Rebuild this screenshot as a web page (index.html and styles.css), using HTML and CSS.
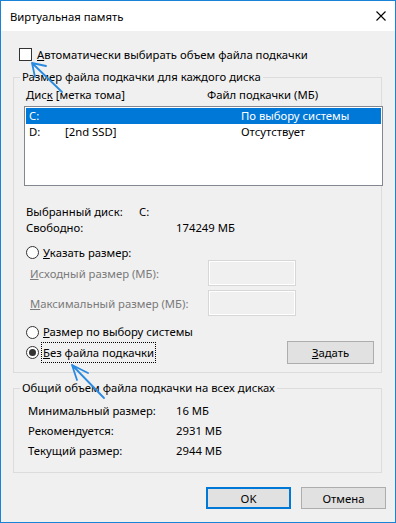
FILE: index.html
```html
<!DOCTYPE html>
<html lang="ru">
<head>
    <meta charset="UTF-8">
    <meta name="viewport" content="width=device-width, initial-scale=1.0">
    <title>Виртуальная память</title>
    <link rel="stylesheet" href="styles.css">
</head>
<body>
    <div class="window">
        <!-- Заголовок окна -->
        <div class="titlebar">
            <span class="title">Виртуальная память</span>
            <svg class="close" width="10" height="10" viewBox="0 0 10 10">
                <path d="M0.5 0.5 L9.5 9.5 M9.5 0.5 L0.5 9.5" stroke="#000" stroke-width="1.1" fill="none"/>
            </svg>
        </div>

        <div class="content">
            <div class="check-row">
                <span class="checkbox"></span>
                <span><u>А</u>втоматически выбирать объем файла подкачки</span>
            </div>

            <!-- Размер файла для каждого диска -->
            <fieldset class="group group-disks">
                <legend>Размер файла подкачки для каждого диска</legend>
                <div class="list-head">
                    <span class="col-disk">Дис<u>к</u> [метка тома]</span>
                    <span>Файл подкачки (МБ)</span>
                </div>
                <div class="listbox">
                    <div class="list-row selected">
                        <span>C:</span><span></span><span>По выбору системы</span>
                    </div>
                    <div class="list-row">
                        <span>D:</span><span>[2nd SSD]</span><span>Отсутствует</span>
                    </div>
                </div>

                <div class="info">
                    <div class="info-row"><span class="key-disk">Выбранный диск:</span><span>C:</span></div>
                    <div class="info-row"><span class="key-free">Свободно:</span><span>174249 МБ</span></div>
                </div>

                <div class="radio-row first">
                    <span class="radio"></span>
                    <span class="radio-label"><u>У</u>казать размер:</span>
                </div>
                <div class="size-row">
                    <span class="size-label disabled"><u>И</u>сходный размер (МБ):</span>
                    <span class="size-input"></span>
                </div>
                <div class="size-row">
                    <span class="size-label disabled"><u>М</u>аксимальный размер (МБ):</span>
                    <span class="size-input"></span>
                </div>
                <div class="radio-row second">
                    <span class="radio"></span>
                    <span class="radio-label"><u>Р</u>азмер по выбору системы</span>
                </div>
                <div class="radio-row last">
                    <span class="radio checked"></span>
                    <span class="radio-label focused"><u>Б</u>ез файла подкачки</span>
                    <button class="btn btn-set"><u>З</u>адать</button>
                </div>
            </fieldset>

            <!-- Общий объем -->
            <fieldset class="group group-total">
                <legend>Общий объем файла подкачки на всех дисках</legend>
                <div class="total-row"><span class="total-key">Минимальный размер:</span><span>16 МБ</span></div>
                <div class="total-row"><span class="total-key">Рекомендуется:</span><span>2931 МБ</span></div>
                <div class="total-row"><span class="total-key">Текущий размер:</span><span>2944 МБ</span></div>
            </fieldset>

            <div class="buttons">
                <button class="btn btn-default">OK</button>
                <button class="btn">Отмена</button>
            </div>
        </div>

        <!-- Стрелки-пометки поверх окна -->
        <svg class="arrows" width="396" height="523" viewBox="0 0 396 523">
            <g stroke="#2a8ae0" stroke-width="1.8" fill="none" stroke-linecap="round" stroke-linejoin="round">
                <path d="M62 92 L32 63 M32 63 L46 66 M32 63 L35 77"/>
                <path d="M104 398 L72 365 M72 365 L88 373 M72 365 L77 380"/>
            </g>
        </svg>
    </div>
</body>
</html>
```

FILE: styles.css
```css
body {
    margin: 0;
    font-family: "Noto Sans", "Liberation Sans", sans-serif;
    font-size: 11.3px;
    color: #000;
}
.window {
    position: relative;
    box-sizing: border-box;
    width: 396px;
    height: 523px;
    border: 1px solid #1883d7;
    background-color: #f0f0f0;
}
.titlebar {
    height: 30px;
    background-color: #fff;
    display: flex;
    align-items: center;
    padding-left: 9px;
    padding-right: 9px;
}
.title {
    flex: 1;
    line-height: 16px;
    padding-top: 1px;
}
.content {
    display: flex;
    flex-direction: column;
}
.check-row {
    display: flex;
    align-items: center;
    height: 16px;
    margin-top: 15px;
    padding-left: 18px;
}
.checkbox {
    box-sizing: border-box;
    width: 13px;
    height: 13px;
    border: 1px solid #333;
    background-color: #fff;
    margin-right: 5px;
}

/* Группы */
.group {
    box-sizing: border-box;
    width: 369px;
    margin: 7px 0 0 12px;
    padding: 0 0 0 10px;
    border: 1px solid #dcdcdc;
    min-inline-size: 0;
}
.group legend {
    line-height: 16px;
    padding: 0 2px;
    margin-left: -4px;
}
.list-head {
    display: flex;
    line-height: 16px;
    margin-top: 2px;
    padding-left: 2px;
}
.col-disk {
    width: 181px;
}
.listbox {
    box-sizing: border-box;
    width: 359px;
    height: 80px;
    margin-top: 3px;
    padding: 1px;
    border: 1px solid #828790;
    background-color: #fff;
}
.list-row {
    display: grid;
    grid-template-columns: 36px 176px 1fr;
    height: 16px;
    line-height: 16px;
    padding-left: 3px;
}
.list-row.selected {
    background-color: #0078d7;
    color: #fff;
}
.info {
    margin-top: 18px;
    padding-left: 2px;
}
.info-row {
    display: flex;
    line-height: 16px;
}
.key-disk {
    width: 113px;
}
.key-free {
    width: 150px;
}
.radio-row {
    display: flex;
    align-items: center;
    height: 16px;
    padding-left: 2px;
}
.radio-row.first {
    margin-top: 9px;
    height: 15px;
}
.radio-row.second {
    margin-top: 8px;
}
.radio-row.last {
    margin-top: 1px;
    height: 23px;
}
.radio {
    box-sizing: border-box;
    width: 13px;
    height: 13px;
    border: 1px solid #333;
    border-radius: 50%;
    background-color: #fff;
    margin-right: 2px;
    display: flex;
    align-items: center;
    justify-content: center;
}
.radio.checked::after {
    content: "";
    width: 7px;
    height: 7px;
    border-radius: 50%;
    background-color: #333;
}
.radio-label {
    line-height: 16px;
    padding: 0 1px;
    border: 1px solid transparent;
}
.radio-label.focused {
    border: 1px dotted #000;
    line-height: 19px;
}
.size-row {
    display: flex;
    align-items: center;
    height: 26px;
    margin-bottom: 4px;
}
.size-label {
    width: 178px;
    padding-left: 6px;
}
.disabled {
    color: #7a7a7a;
}
.size-input {
    box-sizing: border-box;
    width: 88px;
    height: 26px;
    border: 1px solid #d7d7d7;
    box-shadow: inset 0 0 0 1px #fff;
}
.btn {
    box-sizing: border-box;
    width: 85px;
    height: 22px;
    padding: 0;
    font-family: inherit;
    font-size: 11.3px;
    color: #000;
    background-color: #e1e1e1;
    border: 1px solid #adadad;
}
.btn-set {
    width: 87px;
    height: 23px;
    margin-left: auto;
    margin-right: 7px;
}
.btn-default {
    border: 2px solid #0078d7;
}
.group-disks {
    padding-bottom: 8px;
}
.group-total {
    padding-top: 5px;
    padding-bottom: 11px;
}
.total-row {
    display: flex;
    line-height: 20px;
    padding-left: 4px;
}
.total-key {
    width: 148px;
}
.buttons {
    display: flex;
    justify-content: flex-end;
    gap: 10px;
    margin-top: 14px;
    margin-right: 9px;
}
.arrows {
    position: absolute;
    top: -1px;
    left: -1px;
    pointer-events: none;
}
```
